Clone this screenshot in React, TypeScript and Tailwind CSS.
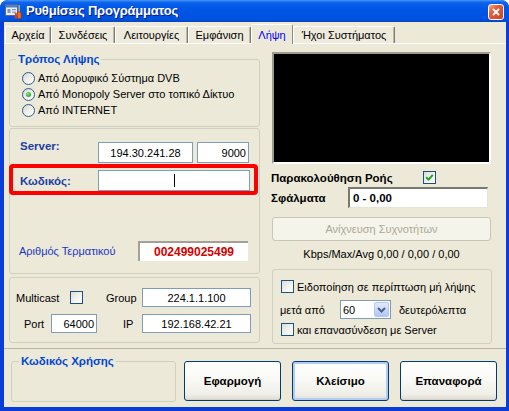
import React from "react";

const FONT = "font-['Liberation_Sans',Arial,sans-serif]";

function Radio({ checked = false }: { checked?: boolean }) {
  return (
    <span className="flex h-[13px] w-[13px] shrink-0 items-center justify-center rounded-full border border-[#2F5D8C] bg-[linear-gradient(135deg,#D6D5CE_0%,#F2F2EE_55%,#FFFFFF_100%)]">
      {checked && (
        <span className="h-[5px] w-[5px] rounded-full bg-[radial-gradient(circle_at_40%_35%,#9BE59B_0%,#3DB83D_50%,#1C941C_100%)]" />
      )}
    </span>
  );
}

function Check({ checked = false }: { checked?: boolean }) {
  return (
    <span className="flex h-[13px] w-[13px] shrink-0 items-center justify-center border border-[#1C5180] bg-[linear-gradient(135deg,#DCDCD7_0%,#F4F4F1_60%,#FFFFFF_100%)]">
      {checked && (
        <svg width="9" height="9" viewBox="0 0 9 9">
          <path d="M1.2 4.2 L3.6 6.6 L7.8 1.8" fill="none" stroke="#21A121" strokeWidth="2" />
        </svg>
      )}
    </span>
  );
}

function XPButton({ label, def = false }: { label: string; def?: boolean }) {
  return (
    <div
      className={
        def
          ? "flex h-[40px] w-[97px] items-center justify-center rounded-[3px] border border-[#003C74] bg-[linear-gradient(180deg,#FFFFFF_0%,#F8F8F4_50%,#EFEEE8_85%,#DEDAD0_100%)] text-[11.5px] font-bold shadow-[inset_0_0_0_2px_#B1CBF3]"
          : "flex h-[40px] w-[97px] items-center justify-center rounded-[3px] border border-[#003C74] bg-[linear-gradient(180deg,#FFFFFF_0%,#F8F8F4_50%,#EFEEE8_85%,#DEDAD0_100%)] text-[11.5px] font-bold shadow-[inset_0_-1px_0_#D6D2C6]"
      }
    >
      {label}
    </div>
  );
}

function TitleIcon() {
  return (
    <svg width="17" height="16" viewBox="0 0 17 16">
      <rect x="0.5" y="1.5" width="12" height="11" fill="#E9EEF7" stroke="#56698C" />
      <rect x="1" y="2" width="11" height="2.5" fill="#4F7FD0" />
      <rect x="2.5" y="6" width="3" height="4" fill="#8095BA" />
      <rect x="7" y="6" width="4" height="1.2" fill="#8095BA" />
      <rect x="7" y="8.6" width="4" height="1.2" fill="#8095BA" />
      <rect x="13.4" y="2" width="1.6" height="8" fill="#A7A7A7" />
      <rect x="12.3" y="9" width="3.8" height="6.5" rx="1" fill="#E8731C" stroke="#B3360E" strokeWidth="0.8" />
      <rect x="9.8" y="10" width="2" height="5.5" fill="#D9412A" />
    </svg>
  );
}

const tabs: { label: string; cls: string; sel?: boolean }[] = [
  { label: "Αρχεία", cls: "w-[46px]" },
  { label: "Συνδέσεις", cls: "w-[64px]" },
  { label: "Λειτουργίες", cls: "w-[73px]" },
  { label: "Εμφάνιση", cls: "w-[63px]" },
  { label: "Λήψη", cls: "w-[42px]", sel: true },
  { label: "Ήχοι Συστήματος", cls: "w-[102px]" },
];

export default function App() {
  return (
    <div
      className={`${FONT} flex h-[411px] w-[509px] flex-col overflow-hidden rounded-t-[8px] bg-[#0A3DD7] text-[11px] leading-[14px] text-black`}
    >
      {/* Title bar */}
      <div className="flex h-[22px] shrink-0 items-center bg-[linear-gradient(180deg,#4A97F6_0%,#0F66EE_10%,#0058E6_30%,#0054E3_60%,#0053E0_85%,#0046C6_100%)] pl-[5px] pr-[5px]">
        <TitleIcon />
        <span className="ml-[4px] text-[13px] font-bold tracking-[-0.2px] text-white [text-shadow:1px_1px_0_#0A1A8A]">
          Ρυθμίσεις Προγράμματος
        </span>
        <div className="ml-auto mt-[2px] flex h-[16px] w-[16px] items-center justify-center rounded-[3px] border border-white bg-[linear-gradient(135deg,#F3A58A_0%,#E4603F_35%,#CB4221_100%)]">
          <svg width="8" height="8" viewBox="0 0 8 8">
            <path d="M1 1 L7 7 M7 1 L1 7" stroke="white" strokeWidth="1.8" />
          </svg>
        </div>
      </div>

      {/* Window body */}
      <div className="mb-[4px] ml-[4px] mr-[3px] flex flex-1 flex-col bg-[#ECE9D8]">
        {/* Tabs */}
        <div className="flex h-[21px] shrink-0 items-end pl-[1px]">
          {tabs.map((t) =>
            t.sel ? (
              <div
                key={t.label}
                className={`${t.cls} relative z-10 -mb-px flex h-[20px] items-center justify-center rounded-t-[2px] border-l border-r border-t border-l-white border-r-[#8D8B80] border-t-white bg-[#ECE9D8] text-[#0000FF]`}
              >
                {t.label}
              </div>
            ) : (
              <div
                key={t.label}
                className={`${t.cls} flex h-[17px] items-center justify-center rounded-t-[2px] border-l border-r border-t border-l-white border-r-[#7E7C72] border-t-white bg-[#EEEBDD] shadow-[inset_-1px_0_0_#BDBAA9]`}
              >
                {t.label}
              </div>
            )
          )}
        </div>

        {/* Tab panel */}
        <div className="flex h-[306px] shrink-0 border-b border-t border-b-[#B9B6A6] border-t-white">
          {/* Left column */}
          <div className="ml-[5px] flex w-[251px] flex-col pt-[15px]">
            {/* Τρόπος Λήψης */}
            <div className="relative flex h-[68px] flex-col rounded-[3px] border border-[#D0D0BF] pl-[12px] pt-[10px]">
              <span className="absolute -top-[8px] left-[6px] bg-[#ECE9D8] px-[2px] text-[11.5px] font-bold text-[#0046D5]">
                Τρόπος Λήψης
              </span>
              <div className="flex h-[16px] items-center">
                <Radio />
                <span className="ml-[3px]">Από Δορυφικό Σύστημα DVB</span>
              </div>
              <div className="flex h-[16px] items-center">
                <Radio checked />
                <span className="ml-[3px]">Από Monopoly Server στο τοπικό Δίκτυο</span>
              </div>
              <div className="flex h-[16px] items-center">
                <Radio />
                <span className="ml-[3px]">Από INTERNET</span>
              </div>
            </div>

            {/* Server group */}
            <div className="relative mt-[1px] flex h-[146px] flex-col rounded-[3px] border border-[#D0D0BF] pl-[10px] pt-[13px]">
              <div className="flex h-[21px]">
                <span className="-mt-[3px] w-[78px] text-[11.5px] font-bold text-[#213FA3]">Server:</span>
                <div className="flex h-[21px] w-[95px] items-center justify-center border border-[#7F9DB9] bg-white">
                  194.30.241.28
                </div>
                <div className="ml-[4px] flex h-[21px] w-[52px] items-center justify-end border border-[#7F9DB9] bg-white pr-[2px]">
                  9000
                </div>
              </div>
              <div className="mt-[7px] flex h-[21px] items-center">
                <span className="w-[78px] text-[11.5px] font-bold text-[#213FA3]">Κωδικός:</span>
                <div className="flex h-[21px] w-[152px] items-center justify-center border border-[#7F9DB9] bg-white">
                  <span className="h-[13px] w-px bg-black" />
                </div>
              </div>
              <div className="mt-[50px] flex h-[20px] items-center">
                <span className="-ml-px w-[119px] text-[#1B35C2]">Αριθμός Τερματικού</span>
                <div className="flex h-[20px] w-[110px] items-center justify-center border-l-2 border-t-2 border-[#A3A197] bg-white text-[12px] font-bold text-[#D80000]">
                  002499025499
                </div>
              </div>
              <div className="absolute left-[-1px] top-[35px] h-[31px] w-[249px] rounded-[4px] border-[4px] border-[#FF0000]" />
            </div>

            {/* Multicast group */}
            <div className="mt-[3px] flex h-[66px] flex-col rounded-[3px] border border-[#D0D0BF] pl-[6px] pt-[10px]">
              <div className="flex h-[19px] items-center">
                <span className="w-[54px]">Multicast</span>
                <Check />
                <span className="ml-[23px] w-[36px]">Group</span>
                <div className="flex h-[19px] w-[109px] items-center justify-center border border-[#7F9DB9] bg-white">
                  224.1.1.100
                </div>
              </div>
              <div className="mt-[7px] flex h-[19px] items-center">
                <span className="ml-[8px] w-[27px]">Port</span>
                <div className="flex h-[19px] w-[46px] items-center justify-end border border-[#7F9DB9] bg-white pr-[2px]">
                  64000
                </div>
                <span className="ml-[26px] w-[19px]">IP</span>
                <div className="flex h-[19px] w-[109px] items-center justify-center border border-[#7F9DB9] bg-white">
                  192.168.42.21
                </div>
              </div>
            </div>
          </div>

          {/* Right column */}
          <div className="ml-[12px] flex w-[220px] flex-col pt-[8px]">
            <div className="h-[112px] w-[219px] border-2 border-b-white border-l-[#9D9B90] border-r-white border-t-[#9D9B90] bg-black" />
            <div className="mt-[7px] flex h-[13px] items-center">
              <span className="-ml-px w-[152px] text-[11.5px] font-bold">Παρακολούθηση Ροής</span>
              <Check checked />
            </div>
            <div className="mt-[3px] flex h-[21px] items-center">
              <span className="-ml-px w-[77px] text-[11.5px] font-bold">Σφάλματα</span>
              <div className="flex h-[21px] w-[140px] items-center border-b border-l-2 border-r border-t-2 border-b-[#E6E4D8] border-l-[#7A7970] border-r-[#E6E4D8] border-t-[#7A7970] bg-white pl-[3px] text-[11.5px] font-bold">
                0 - 0,00
              </div>
            </div>
            <div className="mt-[9px] flex h-[24px] w-[219px] items-center justify-center rounded-[3px] border border-[#C9C7BA] bg-[#F5F4EA] text-[#ACA899]">
              Ανίχνευση Συχνοτήτων
            </div>
            <div className="mt-[6px] w-[219px] text-center">Kbps/Max/Avg 0,00 / 0,00 / 0,00</div>
            <div className="mt-[8px] flex h-[75px] w-[220px] flex-col rounded-[3px] border border-[#D0D0BF] pl-[8px] pt-[10px]">
              <div className="flex h-[13px] items-center">
                <Check />
                <span className="ml-[3px]">Ειδοποίηση σε περίπτωση μή λήψης</span>
              </div>
              <div className="mt-[7px] flex h-[19px] items-center">
                <span className="-ml-px w-[60px]">μετά από</span>
                <div className="flex h-[19px] w-[51px] items-center border border-[#7F9DB9] bg-white">
                  <span className="flex-1 pl-[2px]">60</span>
                  <span className="mr-px flex h-[15px] w-[15px] items-center justify-center rounded-[2px] border border-[#B3C7F1] bg-[linear-gradient(180deg,#E3EBFE_0%,#C8D8FC_50%,#B2C7F6_100%)]">
                    <svg width="9" height="6" viewBox="0 0 9 6">
                      <path d="M1 1 L4.5 4.5 L8 1" fill="none" stroke="#4D6185" strokeWidth="2" />
                    </svg>
                  </span>
                </div>
                <span className="ml-[8px]">δευτερόλεπτα</span>
              </div>
              <div className="mt-[4px] flex h-[13px] items-center">
                <Check />
                <span className="ml-[3px]">και επανασύνδεση με Server</span>
              </div>
            </div>
          </div>
        </div>

        {/* Bottom area */}
        <div className="flex pl-[7px] pt-[12px]">
          <div className="relative h-[41px] w-[165px] rounded-[3px] border border-[#D0D0BF]">
            <span className="absolute -top-[8px] left-[7px] bg-[#ECE9D8] px-[2px] text-[11.5px] font-bold text-[#0046D5]">
              Κωδικός Χρήσης
            </span>
          </div>
          <div className="ml-[8px]">
            <XPButton label="Εφαρμογή" />
          </div>
          <div className="ml-[11px]">
            <XPButton label="Κλείσιμο" def />
          </div>
          <div className="ml-[11px]">
            <XPButton label="Επαναφορά" />
          </div>
        </div>
      </div>
    </div>
  );
}
